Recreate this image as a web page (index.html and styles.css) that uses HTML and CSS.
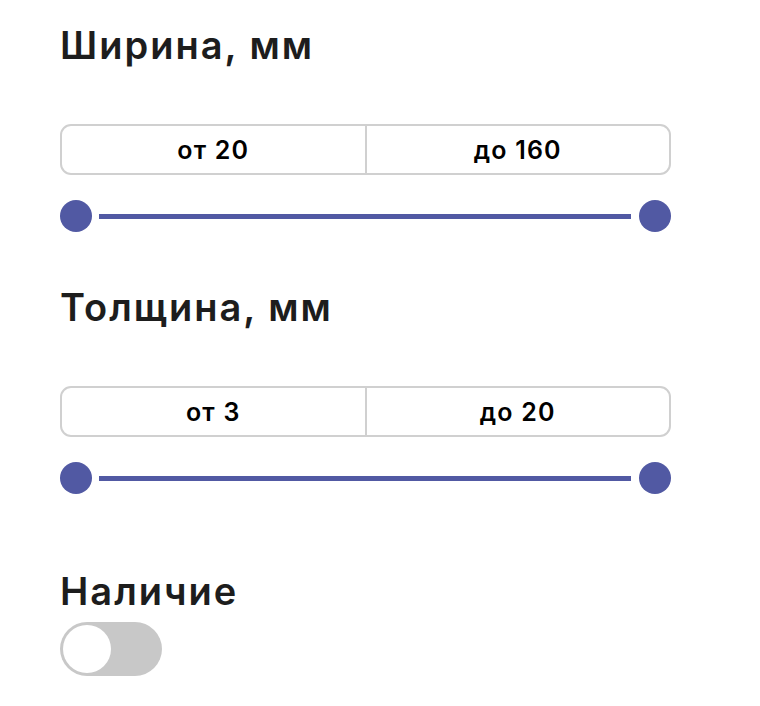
FILE: index.html
```html
<!DOCTYPE html>
<html lang="ru">
<head>
<meta charset="utf-8">
<title>Фильтр</title>
<link rel="stylesheet" href="styles.css">
</head>
<body>
<div class="filters">
  <section class="filter">
    <h2 class="filter-title">Ширина, мм</h2>
    <div class="range-inputs">
      <div class="range-field">от 20</div>
      <div class="range-field">до 160</div>
    </div>
    <div class="slider">
      <span class="thumb"></span>
      <span class="track"></span>
      <span class="thumb"></span>
    </div>
  </section>
  <section class="filter">
    <h2 class="filter-title">Толщина, мм</h2>
    <div class="range-inputs">
      <div class="range-field">от 3</div>
      <div class="range-field">до 20</div>
    </div>
    <div class="slider">
      <span class="thumb"></span>
      <span class="track"></span>
      <span class="thumb"></span>
    </div>
  </section>
  <section class="filter filter-stock">
    <h2 class="filter-title">Наличие</h2>
    <div class="toggle"><span class="toggle-knob"></span></div>
  </section>
</div>
</body>
</html>
```
FILE: styles.css
```css
html, body {
  margin: 0;
  padding: 0;
  background: #ffffff;
}
body {
  font-family: Inter, "Noto Sans", sans-serif;
  color: #1d1d1d;
}
.filters {
  width: 611px;
  padding: 22px 0 0 60px;
  display: flex;
  flex-direction: column;
}
.filter + .filter {
  margin-top: 52px;
}
.filter-title {
  margin: 0;
  font-size: 38px;
  line-height: 46px;
  font-weight: 600;
  letter-spacing: 2px;
  color: #1d1d1d;
}
.range-inputs {
  margin-top: 56px;
  display: flex;
  height: 51px;
  box-sizing: border-box;
  border: 2px solid #d0d0d0;
  border-radius: 11px;
}
.range-field {
  flex: 1;
  display: flex;
  align-items: center;
  justify-content: center;
  font-size: 25px;
  font-weight: 600;
  letter-spacing: 1.2px;
  color: #000;
}
.range-field + .range-field {
  border-left: 2px solid #d0d0d0;
}
.slider {
  margin-top: 25px;
  height: 32px;
  display: flex;
  align-items: center;
}
.thumb {
  width: 32px;
  height: 32px;
  border-radius: 50%;
  background: #5159a3;
  flex: none;
}
.track {
  flex: 1;
  height: 5px;
  margin: 0 8px 0 7px;
  background: #5159a3;
}
.filter-stock {
  margin-top: 74px !important;
}
.toggle {
  margin-top: 8px;
  width: 102px;
  height: 54px;
  border-radius: 27px;
  background: #c8c8c8;
  box-sizing: border-box;
  padding: 3px;
  display: flex;
  align-items: center;
}
.toggle-knob {
  width: 48px;
  height: 48px;
  border-radius: 50%;
  background: #ffffff;
}
```
